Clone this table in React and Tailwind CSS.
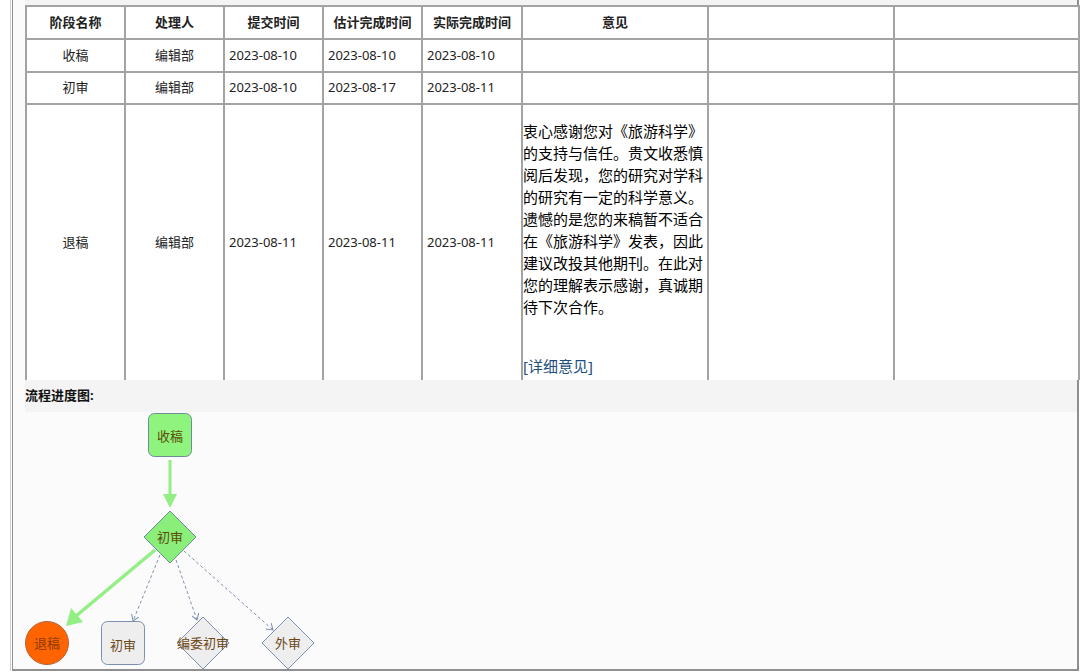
export default function App() {
  const font = { fontFamily: '"Noto Sans", "Noto Sans CJK SC", sans-serif' };
  const heads = ["阶段名称", "处理人", "提交时间", "估计完成时间", "实际完成时间", "意见", "", ""];
  const rows = [
    ["收稿", "编辑部", "2023-08-10", "2023-08-10", "2023-08-10", "h-[33px]"],
    ["初审", "编辑部", "2023-08-10", "2023-08-17", "2023-08-11", "h-[32px]"],
  ];
  const widths = ["w-[99px]", "w-[99px]", "w-[99px]", "w-[99px]", "w-[100px]", "w-[186px]", "w-[186px]", "w-[185px]"];
  const cell = "border-2 border-[#a3a3a3] p-0 text-[13px] text-[#222]";
  const last = "border-2 border-b-0 border-[#a3a3a3] p-0 text-[13px] text-[#222]";
  const date = "pl-[4px] text-[13.5px]";

  return (
    <div className="w-[1080px] h-[672px] bg-white overflow-hidden pl-[10px]" style={font}>
      <div className="h-[671px] w-[1069px] border-l border-[#cfcfcf] pl-px">
        <div className="h-full w-full border-l border-r-2 border-b-2 border-[#8f8f8f] bg-[#fbfbfb] pl-[12px]">
          <div className="h-[5px] bg-[#f4f4f4]" />
          <table className="border-collapse bg-white w-[1053px] table-fixed">
            <colgroup>
              {widths.map((w, i) => (
                <col key={i} className={w} />
              ))}
            </colgroup>
            <thead>
              <tr className="h-[33px]">
                {heads.map((h, i) => (
                  <th key={i} className={`${cell} font-bold text-center`}>
                    {h}
                  </th>
                ))}
              </tr>
            </thead>
            <tbody>
              {rows.map((r, i) => (
                <tr key={i} className={r[5]}>
                  <td className={`${cell} text-center`}>{r[0]}</td>
                  <td className={`${cell} text-center`}>{r[1]}</td>
                  <td className={`${cell} ${date}`}>{r[2]}</td>
                  <td className={`${cell} ${date}`}>{r[3]}</td>
                  <td className={`${cell} ${date}`}>{r[4]}</td>
                  <td className={cell} />
                  <td className={cell} />
                  <td className={cell} />
                </tr>
              ))}
              <tr className="h-[276px]">
                <td className={`${last} text-center`}>退稿</td>
                <td className={`${last} text-center`}>编辑部</td>
                <td className={`${last} ${date}`}>2023-08-11</td>
                <td className={`${last} ${date}`}>2023-08-11</td>
                <td className={`${last} ${date}`}>2023-08-11</td>
                <td className={`${last} align-top pt-[15px]`}>
                  <p className="text-[15px] leading-[22px] text-black">
                    衷心感谢您对《旅游科学》的支持与信任。贵文收悉慎阅后发现，您的研究对学科的研究有一定的科学意义。遗憾的是您的来稿暂不适合在《旅游科学》发表，因此建议改投其他期刊。在此对您的理解表示感谢，真诚期待下次合作。
                  </p>
                  <a className="block mt-[37px] text-[15px] leading-[22px] text-[#1d4f7e]">[详细意见]</a>
                </td>
                <td className={last} />
                <td className={last} />
              </tr>
            </tbody>
          </table>
          <div className="h-[32px] w-[1052px] bg-[#f4f4f4] flex items-center text-[13px] font-bold text-[#111]">
            流程进度图:
          </div>
          <div className="relative h-[257px]">
            <Diagram />
          </div>
        </div>
      </div>
    </div>
  );
}

function Diagram() {
  // coordinates below are page coordinates; the svg is shifted back by (25, 412)
  const txt = { fontFamily: '"Noto Sans CJK SC", sans-serif', fontSize: 13 };
  return (
    <svg width="1052" height="257" className="absolute left-0 top-0">
      <defs>
        <marker id="open" markerWidth="8" markerHeight="8" refX="6" refY="4" orient="auto">
          <path d="M0,0 L6,4 L0,8" fill="none" stroke="#7b8fb3" strokeWidth="1" />
        </marker>
      </defs>
      <g transform="translate(-25,-412)">
        {/* 收稿 */}
        <rect x="148.5" y="413.5" width="43" height="43" rx="6" fill="#8ff47e" stroke="#6d8c99" />
        <text x="170" y="441" textAnchor="middle" fill="#5b4c08" style={txt}>收稿</text>

        {/* green arrow down */}
        <line x1="170" y1="460" x2="170" y2="495" stroke="#93ef84" strokeWidth="3" />
        <path d="M163,494 L177,494 L170,508 Z" fill="#93ef84" />

        {/* 初审 diamond (green) */}
        <polygon points="170,511 196,537 170,563 144,537" fill="#8aee7a" stroke="#6d8c99" />
        <text x="170" y="542" textAnchor="middle" fill="#5b4c08" style={txt}>初审</text>

        {/* green arrow to 退稿 */}
        <line x1="155" y1="550" x2="76" y2="616" stroke="#93ef84" strokeWidth="3.5" />
        <path d="M66,626 L71,608 L83,622 Z" fill="#93ef84" />

        {/* dashed arrows */}
        <line x1="160" y1="555" x2="133" y2="621" stroke="#7b8fb3" strokeDasharray="3 2.5" markerEnd="url(#open)" />
        <line x1="176" y1="560" x2="197" y2="620" stroke="#7b8fb3" strokeDasharray="3 2.5" markerEnd="url(#open)" />
        <line x1="184" y1="551" x2="273" y2="630" stroke="#7b8fb3" strokeDasharray="3 2.5" markerEnd="url(#open)" />

        {/* 退稿 */}
        <circle cx="47" cy="643" r="21.5" fill="#ff6400" stroke="#b2663a" />
        <text x="47" y="648" textAnchor="middle" fill="#8c3a00" style={txt}>退稿</text>

        {/* 初审 box */}
        <rect x="101.5" y="621.5" width="43" height="43" rx="6" fill="#eeeeee" stroke="#7b8fb3" />
        <text x="123" y="650" textAnchor="middle" fill="#6b4716" style={txt}>初审</text>

        {/* 编委初审 */}
        <polygon points="203,617 229,643 203,669 177,643" fill="#eeeeee" stroke="#7b8fb3" />
        <text x="203" y="648" textAnchor="middle" fill="#6b4716" style={txt}>编委初审</text>

        {/* 外审 */}
        <polygon points="288,617 314,643 288,669 262,643" fill="#eeeeee" stroke="#7b8fb3" />
        <text x="288" y="648" textAnchor="middle" fill="#6b4716" style={txt}>外审</text>
      </g>
    </svg>
  );
}
